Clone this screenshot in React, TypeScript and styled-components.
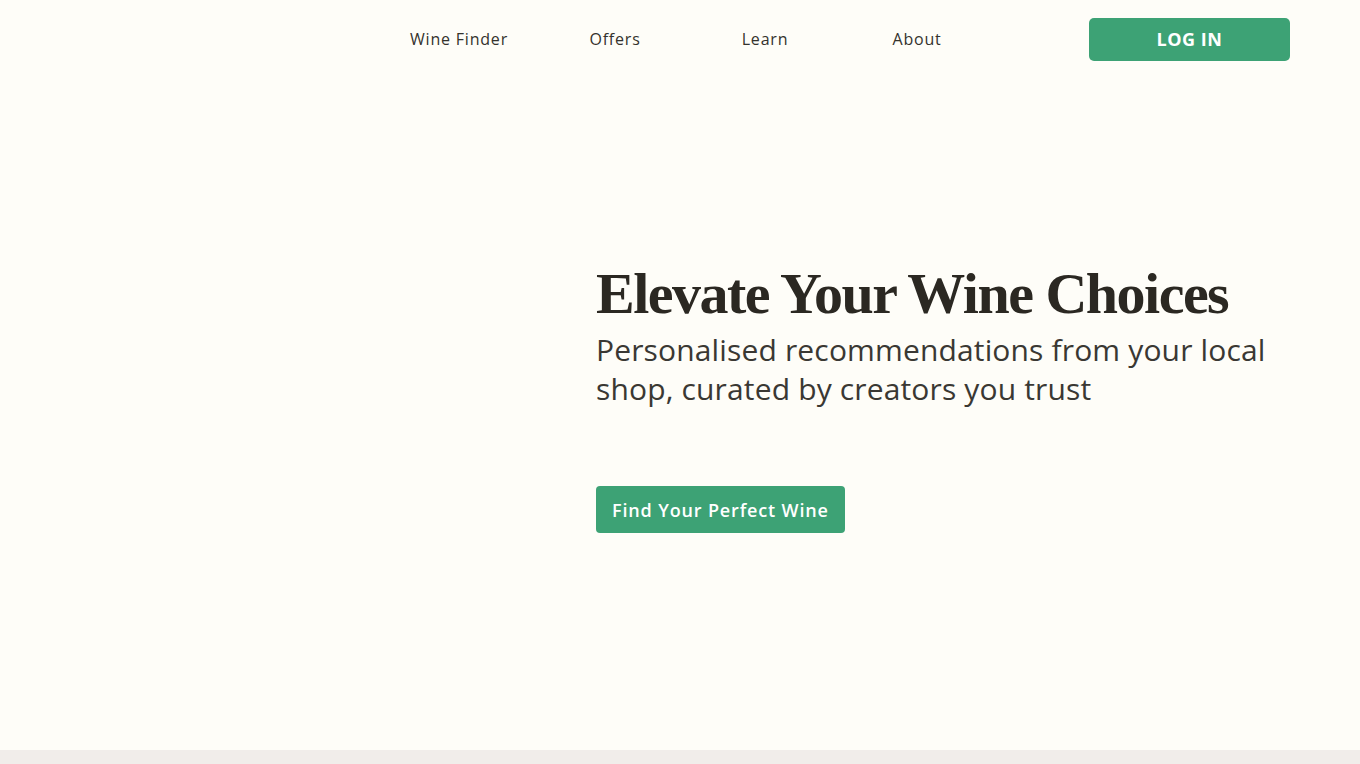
import styled, { createGlobalStyle } from "styled-components";

const GlobalStyle = createGlobalStyle`
  html, body {
    margin: 0;
    padding: 0;
    background: #fefdf8;
  }

  * {
    box-sizing: border-box;
  }
`;

const sans = `"Open Sans", "Liberation Sans", sans-serif`;
const display = `"Liberation Serif", "DejaVu Serif", serif`;

const green = "#3da275";

const Page = styled.div`
  width: 100%;
  min-height: 764px;
  background: #fefdf8;
  color: #2d2a24;
  font-family: ${sans};
`;

const StyledHeader = styled.header`
  display: flex;
  align-items: center;
  justify-content: flex-end;
  height: 80px;
  padding: 0 70px 2px 0;
`;

const NavList = styled.ul`
  display: flex;
  align-items: center;
  margin: 0 96px 0 0;
  padding: 0;
  list-style: none;
`;

const NavItem = styled.li<{ $width: number }>`
  display: flex;
  justify-content: center;
  width: ${({ $width }) => $width}px;
`;

const NavLink = styled.a`
  font-size: 16px;
  color: #34322d;
  text-decoration: none;
  letter-spacing: 0.8px;
`;

const LoginButton = styled.button`
  width: 201px;
  height: 43px;
  border: 0;
  border-radius: 5px;
  background: ${green};
  color: #fff;
  font-family: ${sans};
  font-size: 18px;
  font-weight: 700;
  letter-spacing: 0.5px;
  cursor: pointer;
`;

const navItems = [
  { label: "Wine Finder", width: 164 },
  { label: "Offers", width: 148 },
  { label: "Learn", width: 152 },
  { label: "About", width: 152 },
];

function Header() {
  return (
    <StyledHeader>
      <nav>
        <NavList>
          {navItems.map((item) => (
            <NavItem key={item.label} $width={item.width}>
              <NavLink href="#">{item.label}</NavLink>
            </NavItem>
          ))}
        </NavList>
      </nav>
      <LoginButton>LOG IN</LoginButton>
    </StyledHeader>
  );
}

const Hero = styled.section`
  display: grid;
  grid-template-columns: 596px 1fr;
  height: 670px;
`;

const HeroMedia = styled.div``;

const HeroContent = styled.div`
  display: flex;
  flex-direction: column;
  align-items: flex-start;
  padding-top: 178px;
`;

const Title = styled.h1`
  margin: 0;
  font-family: ${display};
  font-size: 58px;
  font-weight: 700;
  line-height: 72px;
  letter-spacing: -1.5px;
  color: #2b2822;
`;

const Subtitle = styled.p`
  margin: 0;
  max-width: 700px;
  font-size: 30px;
  font-weight: 400;
  line-height: 39px;
  letter-spacing: 0.15px;
  color: #3a3833;
`;

const CtaButton = styled.button`
  margin-top: 78px;
  height: 47px;
  padding: 0 16px;
  border: 0;
  border-radius: 4px;
  background: ${green};
  color: #fff;
  font-family: ${sans};
  font-size: 18px;
  font-weight: 600;
  letter-spacing: 0.85px;
  cursor: pointer;
`;

const NextSection = styled.section`
  height: 14px;
  background: #f1edea;
`;

export default function App() {
  return (
    <Page>
      <GlobalStyle />
      <Header />
      <Hero>
        <HeroMedia />
        <HeroContent>
          <Title>Elevate Your Wine Choices</Title>
          <Subtitle>
            Personalised recommendations from your local shop, curated by
            creators you trust
          </Subtitle>
          <CtaButton>Find Your Perfect Wine</CtaButton>
        </HeroContent>
      </Hero>
      <NextSection />
    </Page>
  );
}
